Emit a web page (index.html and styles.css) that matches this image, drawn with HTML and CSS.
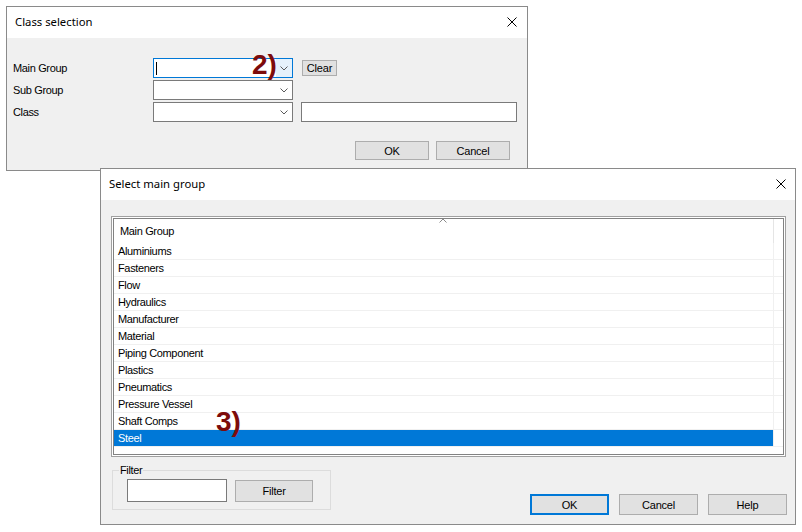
FILE: index.html
```html
<!DOCTYPE html>
<html>
<head>
<meta charset="utf-8">
<title>Class selection</title>
<link rel="stylesheet" href="styles.css">
</head>
<body>
<div class="desk">
  <div class="dlg dlg1">
    <div class="titlebar">
      <span class="title">Class selection</span>
      <svg class="close" width="10" height="10" viewBox="0 0 10 10"><path d="M0.5 0.5L9.5 9.5M9.5 0.5L0.5 9.5" stroke="#000" stroke-width="1" fill="none"/></svg>
    </div>
    <div class="body body1">
      <div class="frow">
        <span class="lbl">Main Group</span>
        <div class="combo focus">
          <span class="caret"></span>
          <span class="drop"><svg width="8" height="5" viewBox="0 0 8 5"><path d="M0.5 0.5L4 4L7.5 0.5" fill="none" stroke="#5a5a5a"/></svg></span>
        </div>
        <button class="btn clear">Clear</button>
      </div>
      <div class="frow">
        <span class="lbl">Sub Group</span>
        <div class="combo">
          <span class="drop"><svg width="8" height="5" viewBox="0 0 8 5"><path d="M0.5 0.5L4 4L7.5 0.5" fill="none" stroke="#5a5a5a"/></svg></span>
        </div>
      </div>
      <div class="frow">
        <span class="lbl">Class</span>
        <div class="combo">
          <span class="drop"><svg width="8" height="5" viewBox="0 0 8 5"><path d="M0.5 0.5L4 4L7.5 0.5" fill="none" stroke="#5a5a5a"/></svg></span>
        </div>
        <div class="textbox classbox"></div>
      </div>
      <div class="actions1">
        <button class="btn b1">OK</button>
        <button class="btn b1">Cancel</button>
      </div>
    </div>
  </div>

  <div class="dlg dlg2">
    <div class="titlebar t2">
      <span class="title">Select main group</span>
      <svg class="close" width="10" height="10" viewBox="0 0 10 10"><path d="M0.5 0.5L9.5 9.5M9.5 0.5L0.5 9.5" stroke="#000" stroke-width="1" fill="none"/></svg>
    </div>
    <div class="body body2">
      <div class="listview">
        <div class="lv-inner">
          <div class="lv-head">
            <div class="hcell">Main Group
              <svg class="sort" width="8" height="5" viewBox="0 0 8 5"><path d="M0.5 4.5L4 1L7.5 4.5" fill="none" stroke="#8a8a8a"/></svg>
            </div>
            <div class="hrest"></div>
          </div>
          <div class="lv-row"><div class="c1">Aluminiums</div><div class="c2"></div></div>
          <div class="lv-row"><div class="c1">Fasteners</div><div class="c2"></div></div>
          <div class="lv-row"><div class="c1">Flow</div><div class="c2"></div></div>
          <div class="lv-row"><div class="c1">Hydraulics</div><div class="c2"></div></div>
          <div class="lv-row"><div class="c1">Manufacturer</div><div class="c2"></div></div>
          <div class="lv-row"><div class="c1">Material</div><div class="c2"></div></div>
          <div class="lv-row"><div class="c1">Piping Component</div><div class="c2"></div></div>
          <div class="lv-row"><div class="c1">Plastics</div><div class="c2"></div></div>
          <div class="lv-row"><div class="c1">Pneumatics</div><div class="c2"></div></div>
          <div class="lv-row"><div class="c1">Pressure Vessel</div><div class="c2"></div></div>
          <div class="lv-row"><div class="c1">Shaft Comps</div><div class="c2"></div></div>
          <div class="lv-row sel"><div class="c1">Steel</div><div class="c2"></div></div>
        </div>
      </div>
      <div class="bottom">
        <div class="group">
          <span class="legend">Filter</span>
          <div class="textbox filterbox"></div>
          <button class="btn filterbtn">Filter</button>
        </div>
        <div class="actions2">
          <button class="btn b2 default">OK</button>
          <button class="btn b2">Cancel</button>
          <button class="btn b2">Help</button>
        </div>
      </div>
    </div>
  </div>

  <div class="note n2">2)</div>
  <div class="note n3">3)</div>
</div>
</body>
</html>
```

FILE: styles.css
```css
html, body {
  margin: 0;
  padding: 0;
  background: #ffffff;
}
.desk {
  position: relative;
  width: 802px;
  height: 532px;
  overflow: hidden;
  font-family: "Liberation Sans", Arial, sans-serif;
  font-size: 11px;
  letter-spacing: -0.35px;
  color: #000;
}
.dlg {
  position: absolute;
  box-sizing: border-box;
  border: 1px solid #8a8a8a;
  background: #f0f0f0;
  display: flex;
  flex-direction: column;
}
.dlg1 {
  left: 6px;
  top: 6px;
  width: 522px;
  height: 165px;
}
.dlg2 {
  left: 100px;
  top: 168px;
  width: 696px;
  height: 357px;
}
.titlebar {
  box-sizing: border-box;
  height: 31px;
  flex: none;
  background: #ffffff;
  display: flex;
  align-items: center;
  justify-content: space-between;
  padding: 0 10px 2px 8px;
}
.t2 {
  padding: 0 9px 2px 8px;
}
.title {
  font-family: "Noto Sans", "Open Sans", sans-serif;
  font-size: 11.3px;
  letter-spacing: 0;
  color: #000;
}
.close {
  display: block;
}
.body {
  flex: 1;
  display: flex;
  flex-direction: column;
}
.body1 {
  padding: 20px 0 0 6px;
}
.frow {
  display: flex;
  align-items: center;
  height: 20px;
  margin-bottom: 2px;
}
.lbl {
  width: 140px;
  flex: none;
}
.combo {
  position: relative;
  box-sizing: border-box;
  width: 140px;
  height: 20px;
  flex: none;
  border: 1px solid #7a7a7a;
  background: #fff;
}
.combo.focus {
  border-color: #0078d7;
}
.caret {
  position: absolute;
  left: 2px;
  top: 3px;
  width: 1px;
  height: 13px;
  background: #000;
}
.drop {
  position: absolute;
  right: 0;
  top: 0;
  bottom: 0;
  width: 16px;
  display: flex;
  align-items: center;
  justify-content: center;
}
.combo.focus .drop {
  background: #e5f1fb;
}
.btn {
  box-sizing: border-box;
  background: #e1e1e1;
  border: 1px solid #adadad;
  font-family: "Liberation Sans", Arial, sans-serif;
  font-size: 11px;
  letter-spacing: -0.2px;
  color: #000;
  padding: 0;
  margin: 0;
  display: flex;
  align-items: center;
  justify-content: center;
}
.clear {
  width: 35px;
  height: 16px;
  margin-left: 9px;
}
.textbox {
  box-sizing: border-box;
  border: 1px solid #7a7a7a;
  background: #fff;
}
.classbox {
  width: 216px;
  height: 20px;
  margin-left: 8px;
}
.actions1 {
  display: flex;
  justify-content: flex-end;
  gap: 7px;
  margin-top: 17px;
  padding-right: 17px;
}
.b1 {
  width: 74px;
  height: 19px;
}
.body2 {
  padding: 16px 8px 9px 10px;
}
.listview {
  box-sizing: border-box;
  width: 675px;
  height: 241px;
  border: 1px solid #a0a0a0;
  padding: 1px;
  background: #fff;
  flex: none;
}
.lv-inner {
  box-sizing: border-box;
  height: 100%;
  border: 1px solid #828282;
  background: #fff;
  overflow: hidden;
}
.lv-head {
  display: flex;
  height: 24px;
}
.hcell {
  position: relative;
  box-sizing: border-box;
  width: 660px;
  border-right: 1px solid #e5e5e5;
  padding-left: 6px;
  display: flex;
  align-items: center;
}
.sort {
  position: absolute;
  left: 325px;
  top: -1px;
}
.hrest {
  flex: 1;
}
.lv-row {
  display: flex;
  height: 17px;
  box-sizing: border-box;
  border-bottom: 1px solid #f0f0f0;
}
.c1 {
  box-sizing: border-box;
  width: 660px;
  border-right: 1px solid #f0f0f0;
  padding-left: 4px;
  display: flex;
  align-items: center;
  white-space: nowrap;
}
.c2 {
  flex: 1;
}
.lv-row.sel .c1 {
  background: #0078d7;
  color: #fff;
}
.bottom {
  margin-top: auto;
  display: flex;
  justify-content: space-between;
  align-items: flex-end;
}
.group {
  position: relative;
  box-sizing: border-box;
  width: 219px;
  height: 40px;
  margin-left: 1px;
  margin-bottom: 5px;
  border: 1px solid #dcdcdc;
  padding: 8px 0 0 14px;
  display: flex;
  align-items: flex-start;
}
.legend {
  position: absolute;
  left: 6px;
  top: -7px;
  padding: 0 1px;
  background: #f0f0f0;
  line-height: 13px;
}
.filterbox {
  width: 100px;
  height: 23px;
}
.filterbtn {
  width: 78px;
  height: 22px;
  margin-left: 8px;
  margin-top: 1px;
}
.actions2 {
  display: flex;
  gap: 10px;
}
.b2 {
  width: 79px;
  height: 21px;
}
.b2.default {
  border: 2px solid #0078d7;
}
.note {
  position: absolute;
  font-family: "Liberation Sans", Arial, sans-serif;
  font-weight: bold;
  font-size: 28px;
  letter-spacing: 0;
  line-height: 1;
  color: #7d0b0b;
}
.n2 {
  left: 252px;
  top: 51px;
}
.n3 {
  left: 216px;
  top: 408px;
}
```
